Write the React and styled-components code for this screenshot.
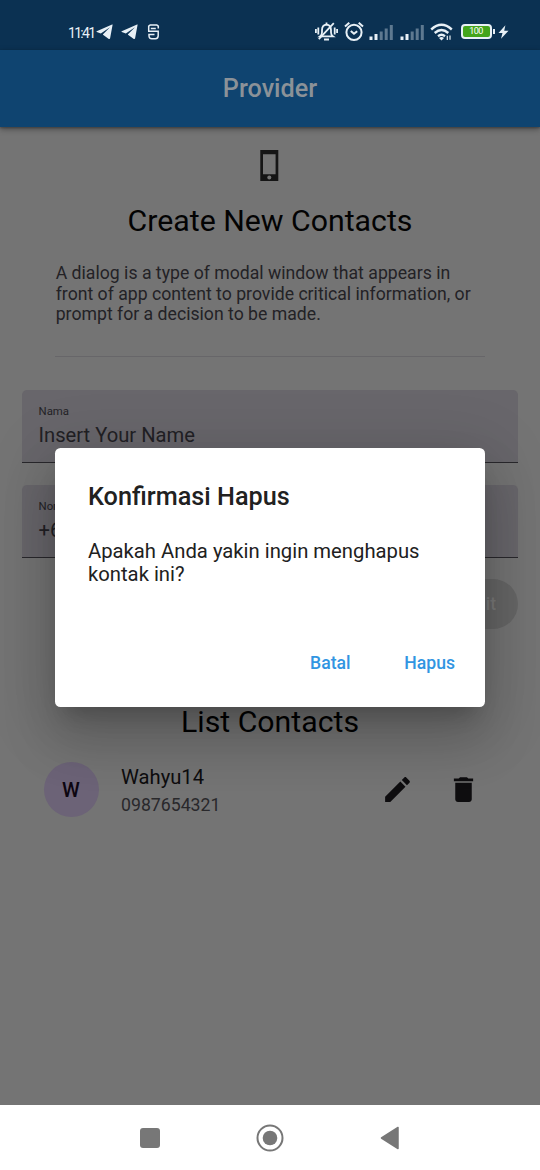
import React from "react";
import styled, { createGlobalStyle } from "styled-components";

const Global = createGlobalStyle`
  * { box-sizing: border-box; }
  body { margin: 0; font-family: Roboto, "Liberation Sans", sans-serif; background: #747474; }
  svg { display: block; flex: none; }
  h1, h2, p { margin: 0; font-weight: 400; }
`;

const Screen = styled.div`
  position: relative;
  width: 540px;
  height: 1170px;
  display: flex;
  flex-direction: column;
  overflow: hidden;
  background: #747474;
`;

const StatusBar = styled.header`
  height: 50px;
  flex: none;
  display: flex;
  align-items: center;
  justify-content: space-between;
  padding: 13px 31px 0 68px;
  background: #0b3152;
  color: #e8f0f6;
`;

const StatusGroup = styled.div`
  display: flex;
  align-items: center;
  gap: ${(p) => p.$gap}px;
`;

const Clock = styled.span`
  width: 22px;
  margin-right: -3px;
  font-size: 14px;
  line-height: 20px;
  padding-top: 2px;
  letter-spacing: -1.7px;
  white-space: nowrap;
`;

const Battery = styled.span`
  display: flex;
  align-items: center;
  margin: 0 -2px 0 1px;
  &::after {
    content: "";
    width: 2px;
    height: 5px;
    margin-left: 1px;
    background: #e8f0f6;
  }
`;

const BatteryLevel = styled.span`
  width: 31px;
  height: 15px;
  border: 2px solid #e8f0f6;
  border-radius: 4px;
  background: #43a51b;
  color: #fff;
  font-size: 9px;
  line-height: 11.5px;
  letter-spacing: -0.6px;
  text-align: center;
`;

const AppBar = styled.div`
  position: relative;
  height: 77px;
  flex: none;
  display: flex;
  align-items: center;
  justify-content: center;
  padding-top: 1px;
  background: #0f4470;
  box-shadow: 0 2px 6px rgba(0, 0, 0, 0.38), 0 1px 2px rgba(0, 0, 0, 0.25);
`;

const AppTitle = styled.h1`
  font-size: 25.2px;
  line-height: 30px;
  font-weight: 500;
  color: #8b9298;
`;

const Content = styled.main`
  flex: 1;
  display: flex;
  flex-direction: column;
  align-items: center;
  padding: 23px 22px 0;
`;

const Heading = styled.h2`
  font-size: 30.25px;
  line-height: 36px;
  color: #030303;
  margin-top: ${(p) => p.$top}px;
`;

const Description = styled.p`
  width: 430px;
  margin-top: 24px;
  padding-bottom: 31px;
  border-bottom: 1px solid #676669;
  padding-left: 0.7px;
  font-size: 17.67px;
  line-height: 20.5px;
  white-space: nowrap;
  color: #232226;
`;

const Field = styled.label`
  width: 100%;
  height: 73px;
  margin-top: ${(p) => p.$top}px;
  padding: 14px 16.5px 0;
  display: flex;
  flex-direction: column;
  background: #68666b;
  border-bottom: 1px solid #29282c;
  border-radius: 5px 5px 0 0;
`;

const FieldLabel = styled.span`
  font-size: 11.4px;
  line-height: 14px;
  color: #242327;
`;

const FieldValue = styled.span`
  margin-top: 5px;
  font-size: 20.2px;
  line-height: 24px;
  color: #222125;
`;

const Submit = styled.button`
  align-self: flex-end;
  width: 116px;
  height: 50px;
  margin-top: 21px;
  padding: 0 22px;
  border: 0;
  border-radius: 25px;
  background: #666;
  color: #797979;
  font: 500 17.6px Roboto, sans-serif;
  text-align: right;
`;

const ContactRow = styled.div`
  width: 100%;
  height: 56px;
  margin-top: 22px;
  padding: 0 38.5px 0 22px;
  display: flex;
  align-items: center;
`;

const Avatar = styled.span`
  width: 55px;
  height: 55px;
  border-radius: 50%;
  display: flex;
  align-items: center;
  justify-content: center;
  background: #6c6377;
  color: #0d0610;
  font-size: 20.2px;
  font-weight: 500;
  padding-right: 1px;
`;

const ContactText = styled.div`
  flex: 1;
  margin-left: 22px;
  padding-top: 5px;
  display: flex;
  flex-direction: column;
`;

const ContactName = styled.span`
  font-size: 20.2px;
  line-height: 27px;
  color: #0e0d0f;
`;

const ContactPhone = styled.span`
  font-size: 17.7px;
  line-height: 29px;
  color: #29282b;
`;

const Actions = styled.div`
  display: flex;
  gap: 33px;
  color: #0e0d0f;
`;

const NavBar = styled.nav`
  height: 65px;
  flex: none;
  display: grid;
  grid-template-columns: repeat(3, 120px);
  place-items: center;
  justify-content: center;
  background: #fff;
  color: #777;
`;

const ModalLayer = styled.div`
  position: absolute;
  inset: 50px 0 65px;
  display: flex;
  align-items: center;
  justify-content: center;
`;

const Dialog = styled.section`
  width: 430px;
  height: 259px;
  display: flex;
  flex-direction: column;
  padding: 34px 11px 0 33px;
  border-radius: 5.5px;
  background: #fff;
  box-shadow: 0 15px 21px -10px rgba(0, 0, 0, 0.2), 0 33px 52px 4px rgba(0, 0, 0, 0.14),
    0 12px 63px 11px rgba(0, 0, 0, 0.12);
`;

const DialogTitle = styled.h2`
  font-size: 25.25px;
  line-height: 29px;
  font-weight: 500;
  color: #212121;
`;

const DialogText = styled.p`
  margin-top: 29px;
  font-size: 20.25px;
  line-height: 23px;
  white-space: pre-line;
  color: #212121;
`;

const DialogActions = styled.div`
  display: flex;
  justify-content: flex-end;
  gap: 11px;
  margin-top: 52px;
`;

const TextButton = styled.button`
  min-width: 88px;
  height: 50px;
  padding: 0 19px;
  border: 0;
  background: none;
  color: #3195e2;
  font: 500 17.6px Roboto, sans-serif;
`;

const Telegram = () => (
  <svg width="17" height="16" viewBox="0 0 17 16" fill="currentColor">
    <path d="M16.6.8Q17 .2 16.1.5L.7 7.2Q0 7.7.8 8.1l4 1.3L14 3.2 7 10.2v.6l5.8 4.1q1 .6 1.3-.6z" />
  </svg>
);

const SwirlBadge = () => (
  <svg width="13" height="16" viewBox="0 0 13 16" fill="none" stroke="currentColor" strokeWidth="1.5">
    <path d="M1.7 6.8V2.2L3.2 1h6.6l1.5 1.2v2.4M3.8 4.4h5M1 7.2h10.2v4.6q0 2.9-2.8 2.9H4.8Q2 14.7 2 11.8v-1.2h5.5" />
  </svg>
);

const BellOff = () => (
  <svg width="23" height="21" viewBox="0 0 23 21" fill="none" stroke="currentColor" strokeWidth="1.8">
    <path d="M5.2 15.3q1.8-1.2 1.8-4V9q0-5 4.5-5.4Q16 4 16 9v2.3q0 2.8 1.8 4z" />
    <path d="M11.5 3.8V1.5M9 18.5h5M3.3 6.5v7M.9 8v4M19.7 6.5v7M22.1 8v4M3.8 18.2 18.8 2.2" />
  </svg>
);

const Alarm = () => (
  <svg width="20" height="20" viewBox="0 0 20 20" fill="none" stroke="currentColor" strokeWidth="2">
    <circle cx="10" cy="10.3" r="7.6" />
    <path d="M6.8 9 10 11.8l3.2-2.6M1 4.6 5.3.8M19 4.6 14.7.8" />
  </svg>
);

const Signal = () => (
  <svg width="25" height="16" viewBox="0 0 25 16" fill="currentColor">
    <path d="M.5 12.5h3V16h-3zM5.5 10h3v6h-3z" />
    <path opacity=".38" d="M10.7 7.5h3V16h-3zM15.7 4.5h3V16h-3zM20.8 1h3v15h-3z" />
  </svg>
);

const Wifi = () => (
  <svg width="24" height="18" viewBox="0 0 24 18" fill="none" stroke="currentColor" strokeWidth="2.4">
    <path d="M1.2 6.5Q11.5-2.8 21.8 6.5M4.7 10q6.8-5.8 13.6 0M8 13.2q3.5-2.7 7 0" />
    <path fill="currentColor" stroke="none" d="m11.5 17.5-2.5-2.6q2.5-1.9 5 0z" />
    <path strokeWidth="1.2" d="M17.3 17v-4.3M20 12.5v4.3" />
  </svg>
);

const Bolt = () => (
  <svg width="11" height="14" viewBox="0 0 11 14" fill="currentColor">
    <path d="M7.4.2.5 7.9h4L3 13.8l7.5-8.1H6.2z" />
  </svg>
);

const MaterialIcon = ({ d, size = 33 }) => (
  <svg width={size} height={size} viewBox="0 0 24 24" fill="currentColor">
    <path d={d} />
  </svg>
);

const PENCIL = "M3 17.25V21h3.75L17.81 9.94l-3.75-3.75L3 17.25zM20.71 7.04c.39-.39.39-1.02 0-1.41l-2.34-2.34c-.39-.39-1.02-.39-1.41 0l-1.83 1.83 3.75 3.75 1.83-1.83z";
const TRASH = "M6 19c0 1.1.9 2 2 2h8c1.1 0 2-.9 2-2V7H6v12zM19 4h-3.5l-1-1h-5l-1 1H5v2h14V4z";

const PhoneIcon = () => (
  <svg width="20" height="32" viewBox="0 0 20 32">
    <path fill="#151515" fillRule="evenodd" d="M.3 0h18v31h-18zM3 4.2v20h12.6v-20z" />
    <circle cx="9.3" cy="27.4" r="2" fill="#747474" />
  </svg>
);

export default function App() {
  return (
    <Screen>
      <Global />
      <StatusBar>
        <StatusGroup $gap={8.5}>
          <Clock>11:41</Clock>
          <Telegram />
          <Telegram />
          <SwirlBadge />
        </StatusGroup>
        <StatusGroup $gap={5.5}>
          <BellOff />
          <Alarm />
          <Signal />
          <Signal />
          <Wifi />
          <Battery><BatteryLevel>100</BatteryLevel></Battery>
          <Bolt />
        </StatusGroup>
      </StatusBar>
      <AppBar><AppTitle>Provider</AppTitle></AppBar>
      <Content>
        <PhoneIcon />
        <Heading $top={21}>Create New Contacts</Heading>
        <Description>
          A dialog is a type of modal window that appears in<br />
          front of app content to provide critical information, or<br />
          prompt for a decision to be made.
        </Description>
        <Field $top={33}>
          <FieldLabel>Nama</FieldLabel>
          <FieldValue>Insert Your Name</FieldValue>
        </Field>
        <Field $top={22}>
          <FieldLabel>Nomor</FieldLabel>
          <FieldValue>+62</FieldValue>
        </Field>
        <Submit>Submit</Submit>
        <Heading $top={75}>List Contacts</Heading>
        <ContactRow>
          <Avatar>W</Avatar>
          <ContactText>
            <ContactName>Wahyu14</ContactName>
            <ContactPhone>0987654321</ContactPhone>
          </ContactText>
          <Actions>
            <MaterialIcon d={PENCIL} />
            <MaterialIcon d={TRASH} />
          </Actions>
        </ContactRow>
      </Content>
      <ModalLayer>
        <Dialog role="dialog">
          <DialogTitle>Konfirmasi Hapus</DialogTitle>
          <DialogText>{"Apakah Anda yakin ingin menghapus\nkontak ini?"}</DialogText>
          <DialogActions>
            <TextButton>Batal</TextButton>
            <TextButton>Hapus</TextButton>
          </DialogActions>
        </Dialog>
      </ModalLayer>
      <NavBar>
        <svg width="20" height="20"><rect width="20" height="20" rx="3" fill="currentColor" /></svg>
        <svg width="28" height="28" fill="none" stroke="currentColor" strokeWidth="2">
          <circle cx="14" cy="14" r="12.5" />
          <circle cx="14" cy="14" r="7.3" fill="currentColor" stroke="none" />
        </svg>
        <svg width="20" height="24" fill="currentColor" stroke="currentColor" strokeWidth="1.5" strokeLinejoin="round">
          <path d="M1.5 12 18 1.5v21z" />
        </svg>
      </NavBar>
    </Screen>
  );
}
